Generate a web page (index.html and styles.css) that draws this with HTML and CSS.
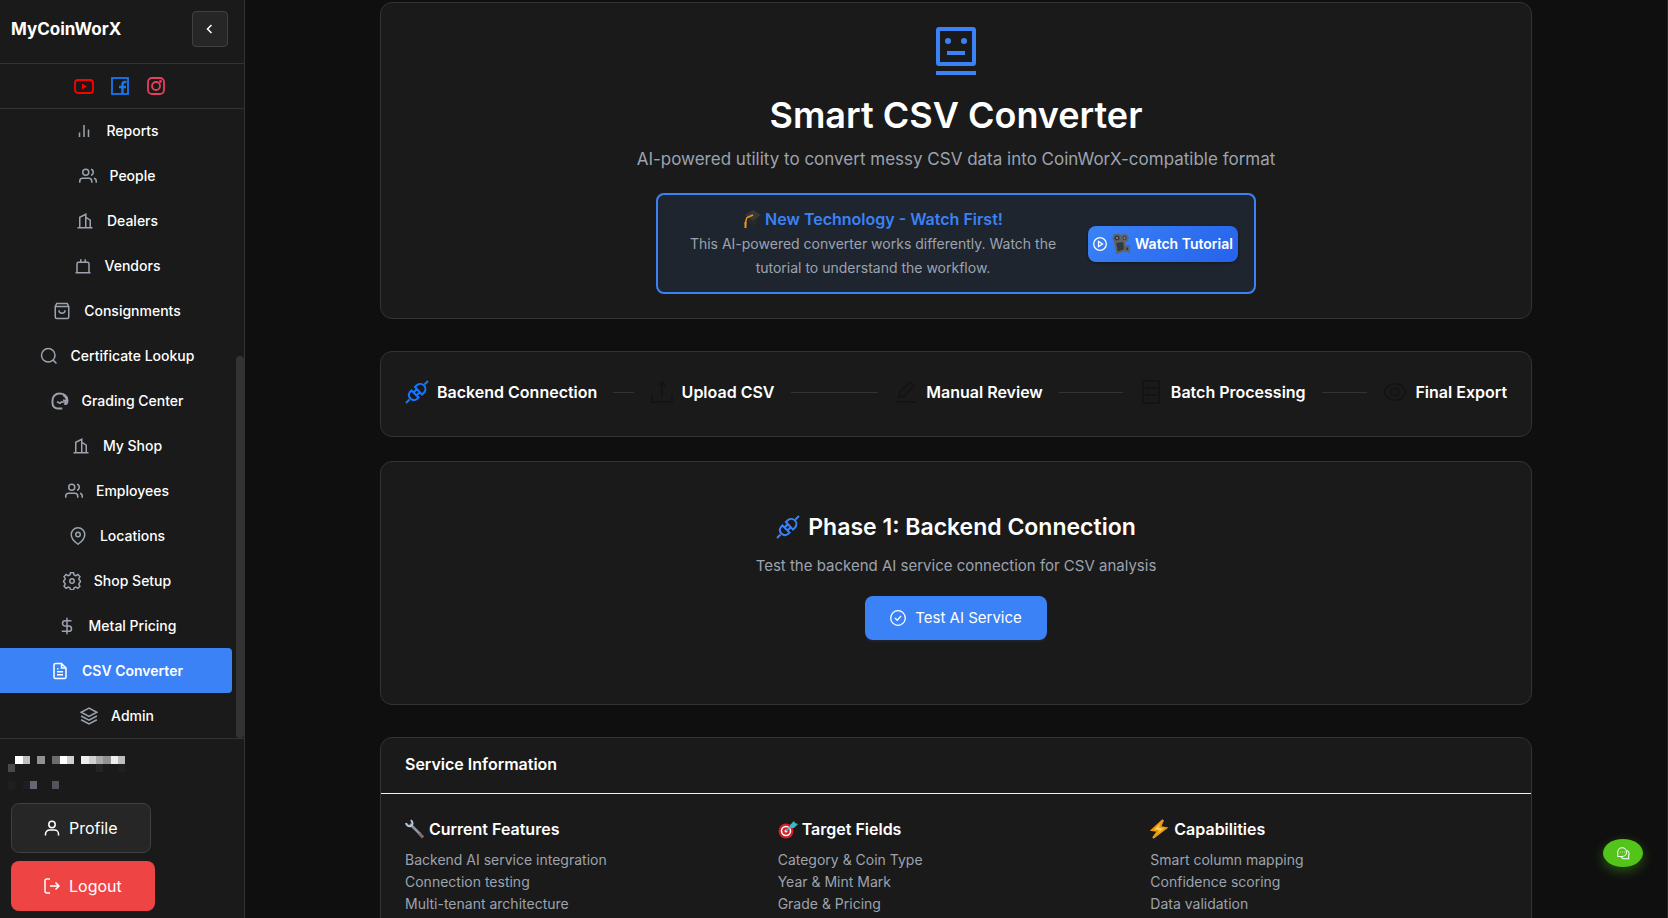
FILE: index.html
```html
<!DOCTYPE html>
<html lang="en">
<head>
<meta charset="utf-8">
<title>Smart CSV Converter</title>
<link rel="stylesheet" href="styles.css">
</head>
<body>
<svg class="defs" aria-hidden="true">
  <symbol id="bars" viewBox="0 0 24 24"><path d="M18 20V10M12 20V4M6 20v-6"/></symbol>
  <symbol id="people" viewBox="0 0 24 24"><path d="M17 21v-2a4 4 0 0 0-4-4H5a4 4 0 0 0-4 4v2M23 21v-2a4 4 0 0 0-3-3.870M16 3.130a4 4 0 0 1 0 7.750"/><circle cx="9" cy="7" r="4"/></symbol>
  <symbol id="building" viewBox="0 0 24 24"><path d="M2 21h20M5 21V7l8-4v18M19 21V11l-6-4"/></symbol>
  <symbol id="vendor" viewBox="0 0 24 24"><path d="M2 21h20M4 21V9a2 2 0 0 1 2-2h12a2 2 0 0 1 2 2v12M9 7V3M15 7V3"/></symbol>
  <symbol id="bag" viewBox="0 0 24 24"><path d="M5 2h14l2 4v14a2 2 0 0 1-2 2H5a2 2 0 0 1-2-2V6zM3 6h18M16 11a4 4 0 0 1-8 0"/></symbol>
  <symbol id="search" viewBox="0 0 24 24"><circle cx="11" cy="11" r="9"/><path d="M22 22l-4.500-4.500"/></symbol>
  <symbol id="grading" viewBox="0 0 24 24"><path stroke-width="2.600" d="M15 22H9a7 7 0 0 1-7-7v-4a9 9 0 0 1 9-9c6 0 11 3 11 9 0 3-1 5-3 5v-4l-3-1"/><path stroke-width="3" d="M16 4c3 1 5 4 5 8"/><path d="M8 13l4 2 2-2 3 1"/></symbol>
  <symbol id="pin" viewBox="0 0 24 24"><path d="M21 10c0 7-9 13-9 13s-9-6-9-13a9 9 0 0 1 18 0z"/><circle cx="12" cy="10" r="3"/></symbol>
  <symbol id="gear" viewBox="0 0 24 24"><path d="M10 1h4l.8 3 2.200 1 2.900-1.600 2.700 2.700L21 9l1 2 1 .5v2l-1 .7-1 2 1.500 2.800-2.700 2.700L17 20l-2.200 1-.8 2.500h-4L9.200 21 7 20l-2.900 1.600-2.700-2.700L3 16l-1-2-1-.5v-2l1-.5 1-2-1.600-2.900 2.700-2.700L7 5l2.200-1z"/><circle cx="12" cy="12" r="3"/></symbol>
  <symbol id="dollar" viewBox="0 0 24 24"><path d="M12 1v22M18 5H9.500a3.500 3.500 0 0 0 0 7h5a3.500 3.500 0 0 1 0 7H5"/></symbol>
  <symbol id="file" viewBox="0 0 24 24"><path d="M14 2H6a2 2 0 0 0-2 2v16a2 2 0 0 0 2 2h12a2 2 0 0 0 2-2V8zM14 2v6h6M16 13H8M16 17H8M10 9H8"/></symbol>
  <symbol id="layers" viewBox="0 0 24 24"><path d="M12 1.500L1.500 7 12 12.500 22.500 7zM1.500 12L12 17.500 22.500 12M1.500 17L12 22.500 22.500 17"/></symbol>
  <symbol id="plug" viewBox="0 0 24 24"><path d="M1 23l3.500-3.500M23 1l-3.500 3.500M10 7l2-2a5.200 5.200 0 0 1 7.300 7.300l-2.300 2.300zM6.500 10.500l7 7-1.500 1.500a5 5 0 0 1-7-7zM8.500 12.500l3-3M11.500 15.500l3-3"/></symbol>
  <symbol id="upload" viewBox="0 0 24 24"><path d="M2 15v7h20v-7M12 17V3M9 6l3-4 3 4"/></symbol>
  <symbol id="edit" viewBox="0 0 24 24"><path d="M2 22h20M5 17l1-5L16 2l4 4-10 10z"/></symbol>
  <symbol id="server" viewBox="0 0 24 24"><path d="M4 1h16v22H4zM4 8h16M4 15h16M8 4.500h1M8 11.500h1M8 19h1"/></symbol>
  <symbol id="eye" viewBox="0 0 24 24"><path d="M1 12c5-11 17-11 22 0-5 11-17 11-22 0z"/><circle cx="12" cy="12" r="4"/></symbol>
</svg>
<div class="app">
  <aside class="sidebar">
    <header class="brand"><strong>MyCoinWorX</strong>
      <button class="collapse" aria-label="Collapse sidebar"><svg viewBox="0 0 12 12"><path d="M7.500 2L3.500 6l4 4"/></svg></button>
    </header>
    <div class="social">
      <a href="#" class="yt" aria-label="YouTube"><svg viewBox="0 0 20 20"><rect x="1" y="4" width="18" height="13" rx="3"/><path class="solid" stroke="none" d="M8 7.500v6l5-3z"/></svg></a>
      <a href="#" class="fb" aria-label="Facebook"><svg viewBox="0 0 20 20"><rect x="2" y="2" width="16" height="16"/><path stroke-width="2.400" d="M12.500 18V8.500q0-2.500 2.500-2.500h1.500M9 11h7"/></svg></a>
      <a href="#" class="ig" aria-label="Instagram"><svg viewBox="0 0 20 20"><rect x="2" y="2" width="16" height="16" rx="4"/><circle cx="10" cy="10" r="4"/><circle class="solid" cx="14.500" cy="5.500" r=".5"/></svg></a>
    </div>
    <nav class="menu">
      <a href="#"><svg><use href="#bars"/></svg>Reports</a>
      <a href="#"><svg><use href="#people"/></svg>People</a>
      <a href="#"><svg><use href="#building"/></svg>Dealers</a>
      <a href="#"><svg><use href="#vendor"/></svg>Vendors</a>
      <a href="#"><svg><use href="#bag"/></svg>Consignments</a>
      <a href="#"><svg><use href="#search"/></svg>Certificate Lookup</a>
      <a href="#"><svg><use href="#grading"/></svg>Grading Center</a>
      <a href="#"><svg><use href="#building"/></svg>My Shop</a>
      <a href="#"><svg><use href="#people"/></svg>Employees</a>
      <a href="#"><svg><use href="#pin"/></svg>Locations</a>
      <a href="#"><svg><use href="#gear"/></svg>Shop Setup</a>
      <a href="#"><svg><use href="#dollar"/></svg>Metal Pricing</a>
      <a href="#" class="active" aria-current="page"><svg><use href="#file"/></svg>CSV Converter</a>
      <a href="#"><svg><use href="#layers"/></svg>Admin</a>
      <span class="thumb"></span>
    </nav>
    <footer class="account">
      <svg class="masked" viewBox="0 0 119 36" aria-hidden="true">
        <path fill="#fff" d="M7 1h8v8H7zM52 1h7v8h-7z"/><path fill="#bdbdbd" d="M15 1h7v8h-7zM110 1h7v8h-7z"/><path fill="#929292" d="M29 1h8v8h-8zM95 1h8v8h-8z"/><path fill="#6c6c6c" d="M44 1h8v8h-8z"/><path fill="#d0d0d0" d="M59 1h7v8h-7zM81 1h7v8h-7z"/><path fill="#eee" d="M73 1h8v8h-8zM103 1h7v8h-7z"/><path fill="#aaa" d="M88 1h7v8h-7z"/><path fill="#494949" d="M0 9h7v8H0z"/><path fill="#242424" d="M88 9h7v8h-7z"/><path fill="#1f1f1f" d="M0 26h7v8H0zM110 9h7v8h-7z"/><path fill="#1e1e22" d="M15 26h7v8h-7z"/><path fill="#656873" d="M22 26h7v8h-7z"/><path fill="#53545b" d="M44 26h7v8h-7z"/>
      </svg>
      <button class="profile"><svg viewBox="0 0 16 16"><circle cx="8" cy="4.500" r="3.200"/><path d="M1.500 15.500V14a4 4 0 0 1 4-4h5a4 4 0 0 1 4 4v1.500"/></svg>Profile</button>
      <button class="logout"><svg viewBox="0 0 16 16"><path d="M6 1H3a2 2 0 0 0-2 2v10a2 2 0 0 0 2 2h3M6 8h9M11.500 4.500L15 8l-3.500 3.500"/></svg>Logout</button>
    </footer>
  </aside>
  <main>
    <div class="content">
      <section class="card hero">
        <svg class="robot" viewBox="0 0 40 50"><rect x="2" y="2" width="36" height="35" rx="1"/><path d="M0 46h40M11 26h18"/><ellipse cx="12" cy="14" rx="3" ry="3"/><ellipse cx="28" cy="14" rx="3" ry="3"/></svg>
        <h1>Smart CSV Converter</h1>
        <p class="lead">AI-powered utility to convert messy CSV data into CoinWorX-compatible format</p>
        <div class="notice">
          <div class="notice-text">
            <h2><svg class="emoji" viewBox="0 0 18 20"><path fill="#292929" d="M5 8l9 0v6l-4 3-5-4z"/><path fill="#383838" d="M2 6l8-5 8 5-8 6z"/><path class="tassel" d="M10 6L4 8.500q-1.500 3-1.500 7"/><path fill="#e99818" d="M1.500 13h2v6h-2z"/></svg>New Technology - Watch First!</h2>
            <p>This AI-powered converter works differently. Watch the tutorial to understand the workflow.</p>
          </div>
          <button class="watch"><svg class="play" viewBox="0 0 14 14"><circle cx="7" cy="7" r="6.300"/><path d="M5.500 4.500v5L9.500 7z"/></svg><svg class="emoji" viewBox="0 0 18 20"><g fill="#34383c" stroke="#606367"><circle cx="5" cy="4" r="3.500"/><circle cx="12.500" cy="4" r="3"/><path d="M3 8l9-1 1 9-8 3zM13 13l4-1v6l-4-2z"/></g><circle cx="5" cy="4" r="1" fill="#8b8d90"/><circle cx="12.500" cy="4" r="1" fill="#8b8d90"/></svg>Watch Tutorial</button>
        </div>
      </section>
      <ol class="card steps">
        <li class="current"><svg><use href="#plug"/></svg><span>Backend Connection</span></li>
        <li><svg><use href="#upload"/></svg><span>Upload CSV</span></li>
        <li><svg><use href="#edit"/></svg><span>Manual Review</span></li>
        <li><svg><use href="#server"/></svg><span>Batch Processing</span></li>
        <li><svg><use href="#eye"/></svg><span>Final Export</span></li>
      </ol>
      <section class="card phase">
        <h2><svg><use href="#plug"/></svg>Phase 1: Backend Connection</h2>
        <p>Test the backend AI service connection for CSV analysis</p>
        <button><svg viewBox="0 0 16 16"><circle cx="8" cy="8" r="7.300"/><path d="M5 8l2.200 2.200L11 6"/></svg>Test AI Service</button>
      </section>
      <section class="card info">
        <h2>Service Information</h2>
        <div class="columns">
          <div><h3><svg class="emoji" viewBox="0 0 20 20"><path stroke="#8c97a6" stroke-width="2.500" d="M5 5l10 10"/><path stroke="#856d70" stroke-width="3" d="M14 14l4 4.500"/><path stroke="#b9c9d8" stroke-width="2" fill="none" d="M1 4q1 4 5 3 3-2 0-6"/></svg>Current Features</h3>
            <p>Backend AI service integration</p><p>Connection testing</p><p>Multi-tenant architecture</p></div>
          <div><h3><svg class="emoji" viewBox="0 0 20 20"><circle cx="8" cy="12" r="7.500" fill="#d41f28"/><circle cx="8" cy="12" r="4.500" fill="#d41f28" stroke="#fff" stroke-width="1.500"/><circle cx="8" cy="12" r="1.500" fill="#fff"/><path stroke="#34b6c2" stroke-width="1.500" d="M8 12l8-8"/><path fill="#38bac5" d="M12 6l4-4 1 2 3 1-4 4h-4z"/></svg>Target Fields</h3>
            <p>Category &amp; Coin Type</p><p>Year &amp; Mint Mark</p><p>Grade &amp; Pricing</p></div>
          <div><h3><svg class="emoji" viewBox="0 0 20 20"><path fill="#ffd34f" stroke="#ec9a13" d="M13 1L2 11l6 1-5 7L16 9l-6-1z"/></svg>Capabilities</h3>
            <p>Smart column mapping</p><p>Confidence scoring</p><p>Data validation</p></div>
        </div>
      </section>
    </div>
  </main>
</div>
<button class="chat" aria-label="Open chat"><svg viewBox="0 0 16 16"><path d="M2 12V7a5 5 0 1 1 5 5zM13 5c3 3 2 5 1.500 6v3.500H9q-2 0-3-2M4.500 7h.5M7 7h.5M9.500 7h.5"/></svg></button>
</body>
</html>
```
FILE: styles.css
```css
* { box-sizing: border-box; }
body { margin: 0; background: #0f0f0f; color: #fff; font: 14px/22px Inter, "Noto Sans", sans-serif; }
h1, h2, h3, p, ol { margin: 0; padding: 0; }
button { font: inherit; color: inherit; border: 0; cursor: pointer; }
a { color: inherit; text-decoration: none; }
svg { fill: none; stroke: currentColor; stroke-width: 2; flex: none; }
.defs { position: absolute; width: 0; height: 0; }
.solid { fill: currentColor; }
.app { display: flex; height: 100vh; overflow: hidden; }

.sidebar { width: 245px; flex: none; display: flex; flex-direction: column; background: #1a1a1a; border-right: 1px solid #333; }
.brand { display: flex; justify-content: space-between; height: 64px; padding: 11px 16px 0 11px; border-bottom: 1px solid #333; }
.brand strong { font-size: 17px; line-height: 36px; font-weight: 700; }
.collapse { width: 36px; height: 36px; padding: 0; display: grid; place-items: center; border: 1px solid #404040; border-radius: 4px; background: #262626; }
.collapse svg { width: 12px; stroke-width: 1.5px; }
.social { display: flex; justify-content: center; align-items: center; gap: 16px; height: 45px; padding-right: 4px; border-bottom: 1px solid #333; }
.social a { display: flex; }
.social svg { width: 20px; height: 20px; stroke-width: 1.8px; }
.yt { color: #f00; }
.fb { color: #1877f2; }
.ig { color: #e4405f; }
.menu { position: relative; flex: 1; min-height: 0; display: flex; flex-direction: column; justify-content: flex-end; overflow: hidden; padding-right: 12px; }
.menu a { display: flex; flex: none; align-items: center; justify-content: center; gap: 13px; height: 45px; padding-left: 2px; font-weight: 500; border-radius: 0 4px 4px 0; }
.menu svg { width: 18px; height: 18px; color: #9ca3af; stroke-width: 2px; }
.menu .active { background: #3b82f6; font-weight: 600; }
.menu .active svg { color: #fff; }
.thumb { position: absolute; right: 0; top: 247px; bottom: 0; width: 8px; border-radius: 4px; background: #333; }
.account { display: flex; flex-direction: column; align-items: flex-start; border-top: 1px solid #333; padding: 16px 11px 7px; }
.masked { width: 119px; height: 36px; margin: 0 0 12px -3px; stroke: none; }
.account button { display: flex; align-items: center; gap: 9px; height: 50px; padding: 0 33px; border-radius: 8px; font-size: 16px; }
.account button svg { width: 16px; height: 16px; stroke-width: 1.5px; }
.account .profile { padding: 0 32px; background: #262626; border: 1px solid #404040; margin-bottom: 8px; }
.account .logout { background: #ef4444; }

main { flex: 1; min-width: 0; overflow: hidden; border-right: 1px solid #262626; }
.content { max-width: 1200px; margin: 0 auto; padding: 2px 24px; }
.card { background: #1a1a1a; border: 1px solid #333; border-radius: 12px; }
.hero { display: flex; flex-direction: column; align-items: center; padding: 24px; margin-bottom: 32px; text-align: center; }
.robot { width: 40px; height: 50px; color: #3b82f6; stroke-width: 4px; }
.robot ellipse { fill: currentColor; stroke: none; }
.hero h1 { font-size: 36px; line-height: 46px; font-weight: 600; margin-top: 15px; }
.lead { font-size: 17px; line-height: 28px; margin: 7px 0 20px; color: #9ca3af; }
.notice { display: flex; align-items: center; gap: 16px; width: 600px; max-width: 100%; padding: 12px 16px; border: 2px solid #3b82f6; border-radius: 8px; background: #1e252f; }
.notice-text { flex: 1; padding: 0 16px; }
.notice h2 { display: flex; justify-content: center; align-items: center; gap: 4px; font-size: 16px; line-height: 24px; font-weight: 600; color: #3b82f6; }
.notice p { margin: 1px -8px 0; font-size: 14px; line-height: 24px; color: #9ca3af; }
.emoji { width: 20px; height: 20px; stroke: none; }
.notice .emoji { width: 18px; }
.tassel { stroke: #e99818; stroke-width: 1.5px; }
.watch { display: flex; align-items: center; justify-content: center; width: 150px; height: 36px; padding: 0; gap: 5px; border-radius: 8px; font-size: 14px; font-weight: 600; background: linear-gradient(135deg, #3b82f6, #2563eb); white-space: nowrap; box-shadow: 0 1px 3px #0006; }
.play { width: 14px; height: 14px; stroke-width: 1.3px; }

.steps { display: flex; gap: 16px; list-style: none; padding: 24px 24px 28px; margin-bottom: 24px; }
.steps li { display: flex; flex: 1; align-items: center; gap: 8px; height: 32px; color: #141414; }
.steps li:last-child { flex: none; }
.steps li:not(:last-child)::after { content: ""; flex: 1; height: 1px; background: #333; margin-left: 8px; }
.steps svg { width: 24px; height: 24px; stroke-width: 2px; }
.steps span { color: #fff; font-size: 16px; font-weight: 600; white-space: nowrap; }
.steps .current { color: #1677ff; }

.phase { display: flex; flex-direction: column; align-items: center; padding: 48px 24px 64px; margin-bottom: 32px; }
.phase h2 { display: flex; align-items: center; gap: 8px; font-size: 23px; line-height: 34px; font-weight: 600; }
.phase h2 svg { width: 24px; height: 24px; color: #3b82f6; }
.phase p { font-size: 15px; line-height: 24px; margin: 10px 0 18px; color: #9ca3af; }
.phase button { display: flex; align-items: center; gap: 9px; height: 44px; padding: 0 25px; border-radius: 8px; background: #3b82f6; font-size: 15px; box-shadow: 0 2px 0 #3b82f61a; }
.phase button svg { width: 16px; height: 16px; stroke-width: 1.3px; }

.info > h2 { padding: 0 24px 2px; font-size: 16px; line-height: 53px; font-weight: 600; border-bottom: 1px solid #f0f0f0; }
.columns { display: grid; grid-template-columns: repeat(3, 1fr); padding: 23px 8px 24px 24px; }
.columns h3 { display: flex; align-items: center; gap: 4px; font-size: 16px; line-height: 24px; font-weight: 600; margin-bottom: 8px; }
.columns p { font-size: 14px; line-height: 22px; color: #9ca3af; }
.chat { position: fixed; right: 25px; bottom: 51px; width: 40px; height: 28px; padding: 0; display: grid; place-items: center; border-radius: 50%; background: #52c41a; box-shadow: 0 4px 12px #52c41a66; }
.chat svg { width: 14px; height: 14px; stroke-width: 1.2px; }
```
